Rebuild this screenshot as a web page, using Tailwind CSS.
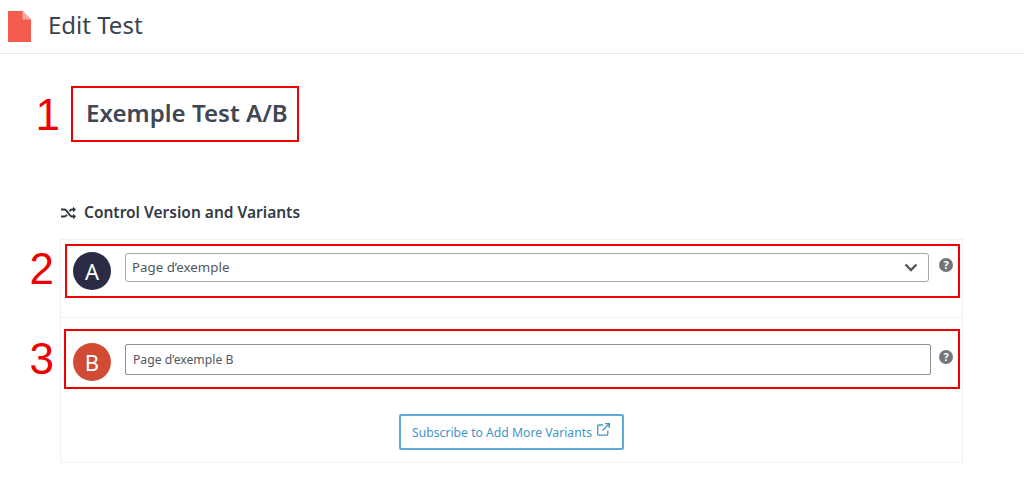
<!DOCTYPE html>
<html lang="en">
<head>
    <meta charset="UTF-8">
    <title>Edit Test</title>
    <script src="https://cdn.jsdelivr.net/npm/@tailwindcss/browser@4"></script>
</head>
<body class="bg-white h-[498px] overflow-hidden font-['Noto_Sans','Open_Sans',sans-serif] text-[#3c434a]">
    <header class="h-[54px] border-b border-[#e8e8e8] flex items-center pl-2">
        <svg width="23" height="31" viewBox="0 0 23 31" class="mb-[1px]">
            <path d="M0 0H14.5L23 8.5V31H0Z" fill="#f35c4e"/>
            <path d="M14.5 0L23 8.5H14.5Z" fill="#f9a89f"/>
        </svg>
        <h1 class="ml-[17px] text-[24px] leading-none text-[#3b4350] mb-[3px]">Edit Test</h1>
    </header>

    <main class="pl-[60px] w-[963px]">
        <div class="ml-[11px] mt-[32px] relative w-[228px] h-[56px] border-2 border-[#f00000] flex items-center pl-[13px]">
            <span class="absolute right-full mr-[13px] top-[2px] text-[#f00000] text-[44px] leading-[50px] font-['Liberation_Sans',sans-serif]">1</span>
            <h2 class="text-[24.1px] leading-none font-semibold text-[#3f4753] whitespace-nowrap mb-[1px]">Exemple Test A/B</h2>
        </div>

        <div class="mt-[61px] flex items-center gap-[7px] h-[20px]">
            <svg width="17" height="14" viewBox="0 0 17 14" fill="none" stroke="#2f3744" stroke-width="1.8">
                <path d="M1 3.5H4.5C7.5 3.5 9 10.5 12 10.5H14.5"/>
                <path d="M1 10.5H4.5C5.6 10.5 6.5 9.6 7 8.6M9.5 5.4C10 4.4 11 3.5 12 3.5H14.5"/>
                <path d="M13 0.8L16 3.5L13 6.2Z" fill="#2f3744" stroke="none"/>
                <path d="M13 7.8L16 10.5L13 13.2Z" fill="#2f3744" stroke="none"/>
            </svg>
            <h3 class="text-[15.5px] leading-none font-semibold text-[#333a46]">Control Version and Variants</h3>
        </div>

        <section class="mt-[16px] border border-[#eff0f2] h-[224px] px-[4px] pt-[4px]">
            <div class="relative h-[54px] w-[895px] border-2 border-[#f00000] flex items-start pl-[6px] pt-[6px]">
                <span class="absolute right-full mr-[13px] top-[-2px] text-[#f00000] text-[44px] leading-[50px] font-['Liberation_Sans',sans-serif]">2</span>
                <div class="w-[38px] h-[38px] rounded-full bg-[#2a2c45] text-white flex items-center justify-center text-[22px] leading-none">A</div>
                <div class="ml-[14px] mt-[1px] w-[804px] h-[29px] border border-[#a7aaad] rounded-[3px] flex items-center justify-between pl-[6px] pr-[10px] text-[13.3px] text-[#50575e]">
                    <span class="pt-[1px]">Page d’exemple</span>
                    <svg width="14" height="9" viewBox="0 0 14 9" fill="none" stroke="#50575e" stroke-width="2.4"><path d="M1.5 1.5L7 7L12.5 1.5"/></svg>
                </div>
                <svg width="14" height="14" viewBox="0 0 14 14" class="ml-[10px] mt-[6px]">
                    <circle cx="7" cy="7" r="7" fill="#71767b"/>
                    <text x="7" y="11" text-anchor="middle" font-size="11" font-weight="700" fill="#fff" font-family="Noto Sans">?</text>
                </svg>
            </div>

            <div class="border-t border-[#eff0f2] mt-[19px] -mx-[4px]"></div>

            <div class="relative mt-[11px] -ml-[1px] h-[60px] w-[896px] border-2 border-[#f00000] flex items-start pl-[7px] pt-[12px]">
                <span class="absolute right-full mr-[12px] top-[3px] text-[#f00000] text-[44px] leading-[50px] font-['Liberation_Sans',sans-serif]">3</span>
                <div class="w-[38px] h-[38px] rounded-full bg-[#d14a34] text-white flex items-center justify-center text-[22px] leading-none">B</div>
                <div class="ml-[14px] mt-[1px] w-[806px] h-[31px] border border-[#8c8f94] rounded-[2px] flex items-center pl-[7px] pt-[2px] text-[12.2px] text-[#50575e]">Page d’exemple B</div>
                <svg width="14" height="14" viewBox="0 0 14 14" class="ml-[8px] mt-[7px]">
                    <circle cx="7" cy="7" r="7" fill="#71767b"/>
                    <text x="7" y="11" text-anchor="middle" font-size="11" font-weight="700" fill="#fff" font-family="Noto Sans">?</text>
                </svg>
            </div>

            <div class="flex justify-center mt-[25px] pr-[1px]">
                <a href="#" class="w-[225px] h-[36px] border-2 border-[#5dacd8] rounded-[2px] flex items-center justify-center gap-[5px] text-[12.2px] text-[#4295c7]">
                    <span class="pt-[2px]">Subscribe to Add More Variants</span>
                    <svg width="13" height="13" viewBox="0 0 13 13" fill="none" stroke="#4295c7" stroke-width="1.3" class="mb-[5px]">
                        <path d="M6 2H2C1.2 2 .7 2.5 .7 3.2V11C.7 11.7 1.2 12.2 2 12.2H9.5C10.2 12.2 10.8 11.7 10.8 11V7.5"/>
                        <path d="M5.5 7.5L12 1M8 .7H12.3V5"/>
                    </svg>
                </a>
            </div>
        </section>
    </main>
</body>
</html>
